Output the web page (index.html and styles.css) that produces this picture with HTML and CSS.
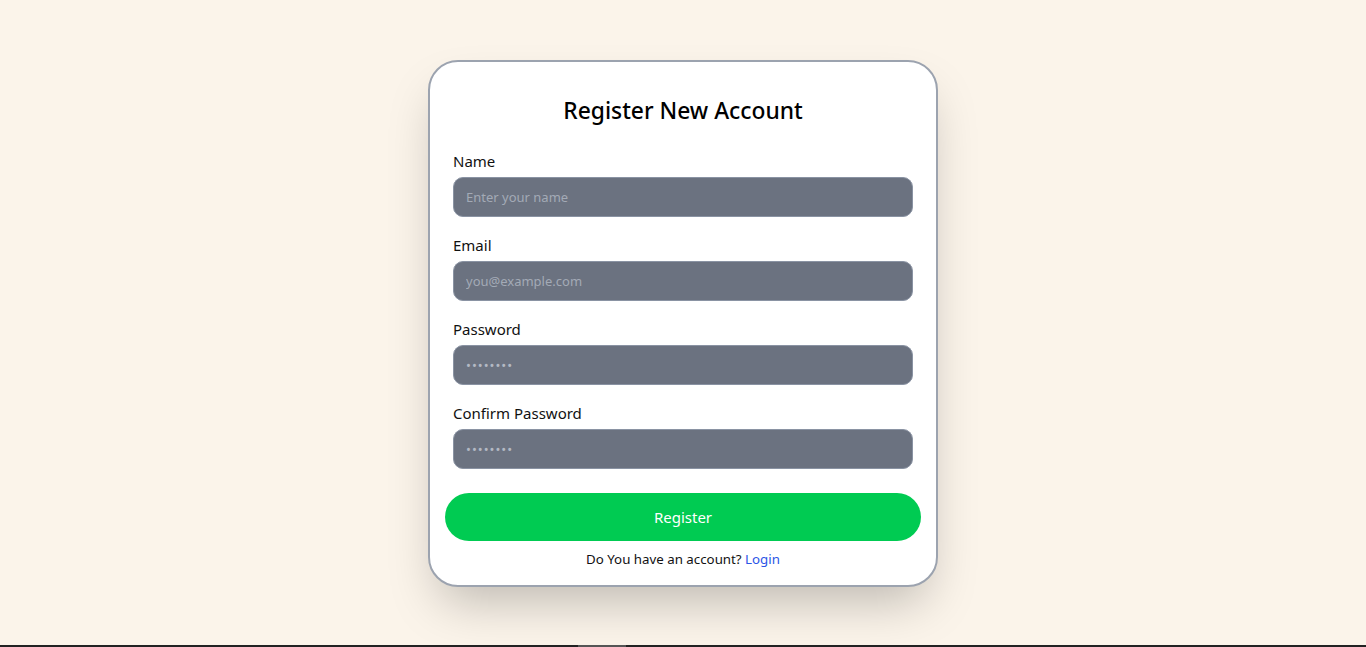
FILE: index.html
```html
<!DOCTYPE html>
<html lang="en">
<head>
<meta charset="utf-8">
<title>Register</title>
<link rel="stylesheet" href="styles.css">
</head>
<body>
<div class="page">
  <main class="main">
    <form class="card">
      <h1 class="title">Register New Account</h1>
      <div class="field">
        <label class="label" for="name">Name</label>
        <input class="input" id="name" type="text" placeholder="Enter your name">
      </div>
      <div class="field">
        <label class="label" for="email">Email</label>
        <input class="input" id="email" type="email" placeholder="you@example.com">
      </div>
      <div class="field">
        <label class="label" for="pw">Password</label>
        <input class="input input-pw" id="pw" type="password" placeholder="••••••••">
      </div>
      <div class="field">
        <label class="label" for="pw2">Confirm Password</label>
        <input class="input input-pw" id="pw2" type="password" placeholder="••••••••">
      </div>
      <button class="btn" type="button">Register</button>
      <p class="foot">Do You have an account? <a class="link" href="#">Login</a></p>
    </form>
  </main>
  <div class="bar"><div class="bar-seg"></div></div>
</div>
</body>
</html>
```

FILE: styles.css
```css
* { box-sizing: border-box; }
html, body { margin: 0; padding: 0; }
body {
  background: #fbf4ea;
  font-family: "Noto Sans", "Open Sans", sans-serif;
  color: #111;
}
.page {
  min-height: 100vh;
  display: flex;
  flex-direction: column;
}
.main {
  flex: 1;
  display: flex;
  align-items: center;
  justify-content: center;
  padding-top: 1px;
}
.card {
  width: 510px;
  background: #fff;
  border: 2px solid #9ca3af;
  border-radius: 30px;
  padding: 33px 23px 16px;
  box-shadow: 0 25px 50px -12px rgba(0,0,0,0.25);
}
.title {
  margin: 0 0 22px;
  text-align: center;
  font-size: 22.8px;
  line-height: 32px;
  font-weight: 500;
  color: #000;
}
.field {
  display: flex;
  flex-direction: column;
  gap: 4px;
  margin-bottom: 16px;
}
.label {
  font-size: 15px;
  line-height: 24px;
  color: #111;
}
.input {
  height: 40px;
  width: 100%;
  background: #6b7280;
  border: 1px solid #8a93a3;
  border-radius: 10px;
  padding: 0 12px;
  font-family: inherit;
  font-size: 13px;
  color: #fff;
  outline: none;
}
.input::placeholder { color: #a3aab6; }
.input-pw::placeholder { letter-spacing: 1px; color: #b3b9c4; }
.btn {
  display: block;
  margin: 24px -8px 0;
  width: calc(100% + 16px);
  height: 48px;
  border: none;
  border-radius: 24px;
  background: #00cb52;
  color: #fff;
  font-family: inherit;
  font-size: 15px;
}
.foot {
  margin: 8px 0 0;
  text-align: center;
  font-size: 13.3px;
  line-height: 20px;
  color: #111;
}
.link { color: #2b55e6; text-decoration: none; }
.bar {
  height: 2px;
  background: #222;
}
.bar-seg {
  margin-left: 578px;
  width: 48px;
  height: 2px;
  background: #555;
}
```
